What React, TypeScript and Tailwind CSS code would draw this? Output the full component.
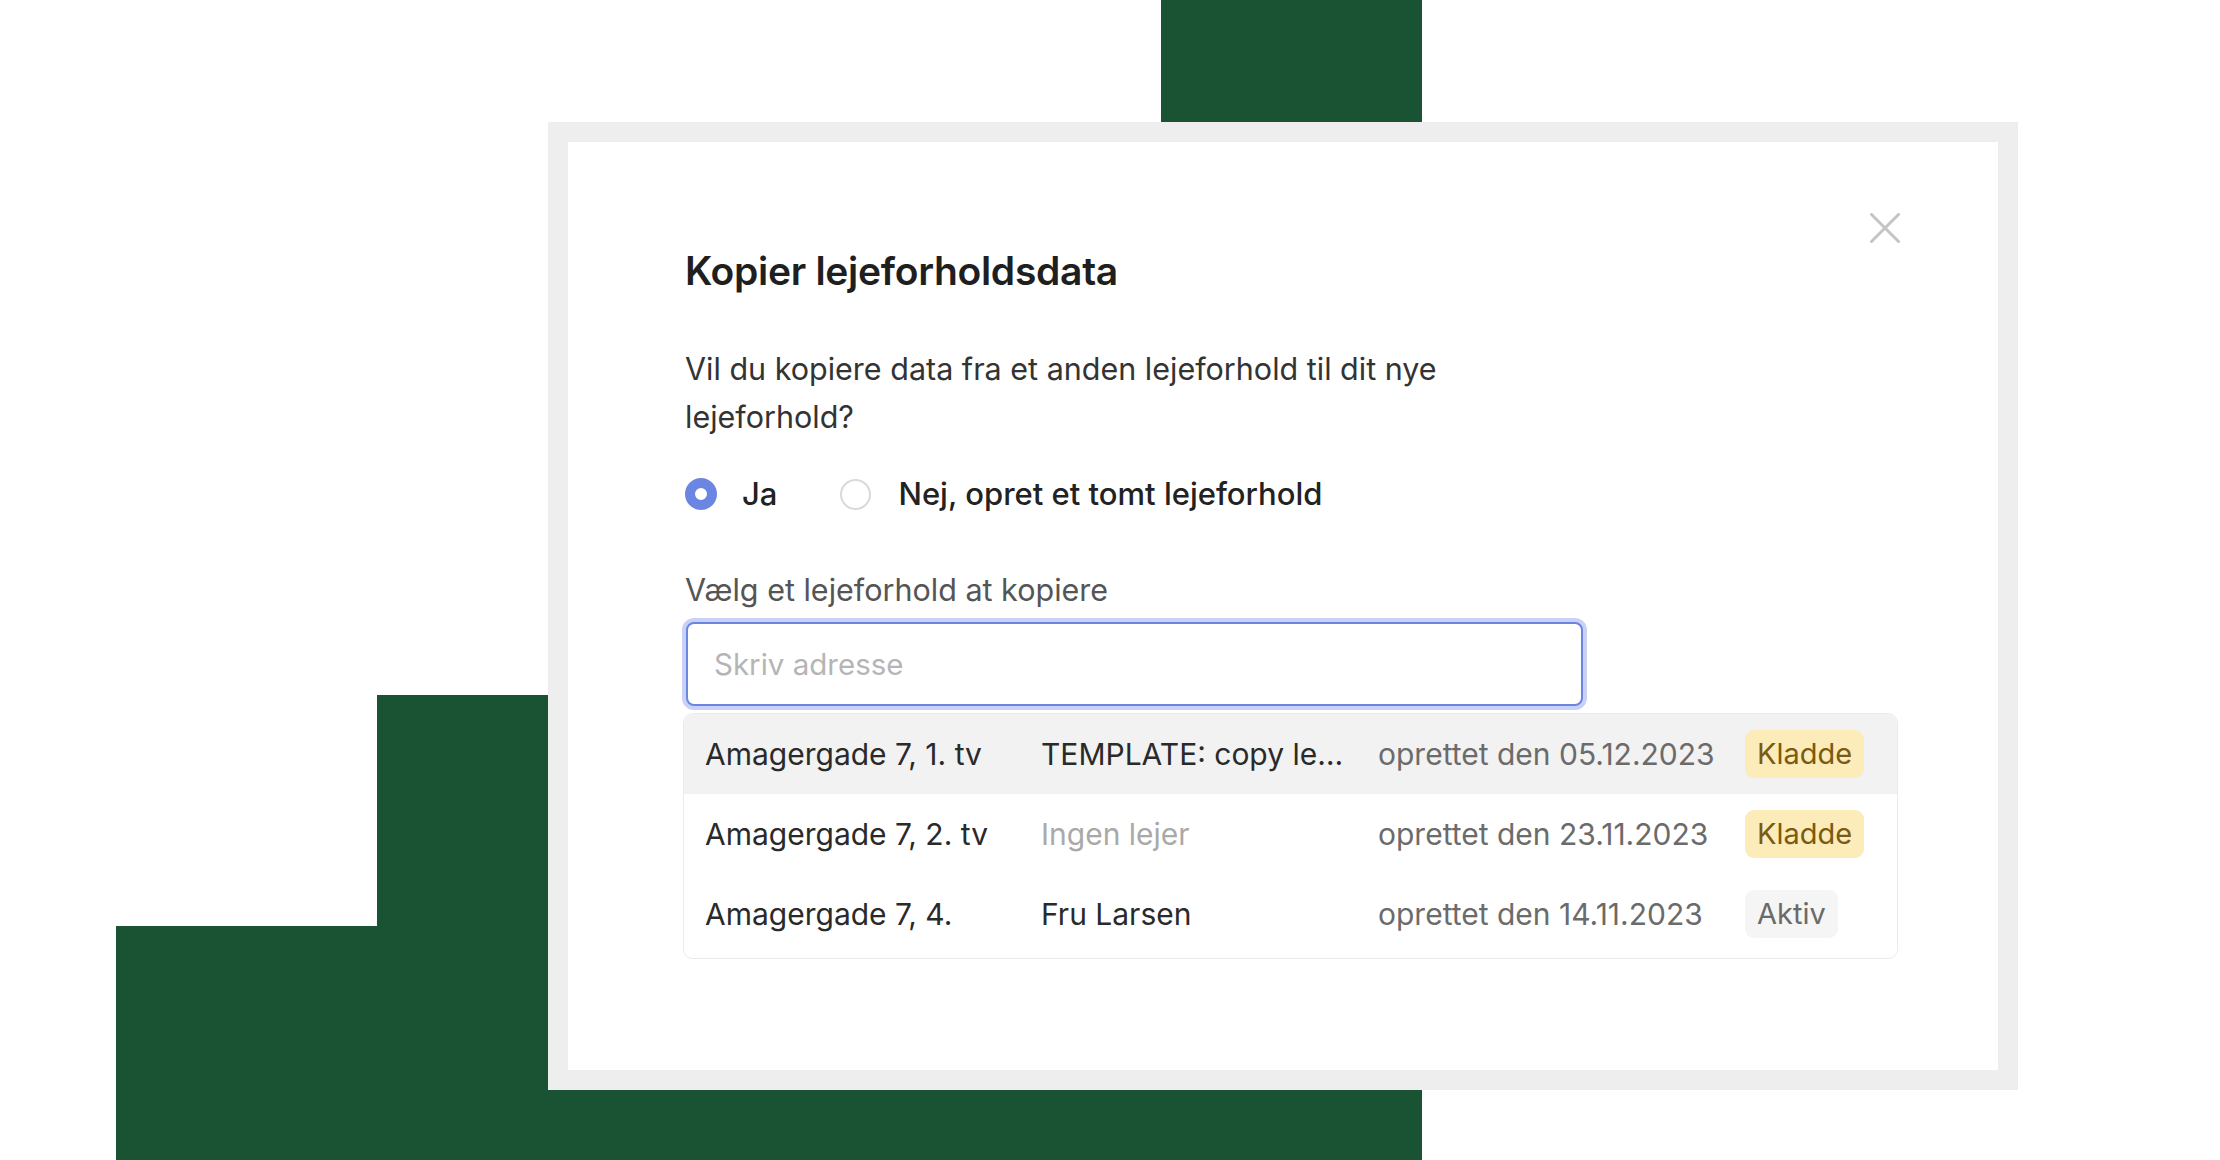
import React from "react";

type Row = {
  address: string;
  tenant: string;
  tenantMuted?: boolean;
  created: string;
  status: "Kladde" | "Aktiv";
  highlighted?: boolean;
};

const rows: Row[] = [
  {
    address: "Amagergade 7, 1. tv",
    tenant: "TEMPLATE: copy lejeforhold data",
    created: "oprettet den 05.12.2023",
    status: "Kladde",
    highlighted: true,
  },
  {
    address: "Amagergade 7, 2. tv",
    tenant: "Ingen lejer",
    tenantMuted: true,
    created: "oprettet den 23.11.2023",
    status: "Kladde",
  },
  {
    address: "Amagergade 7, 4.",
    tenant: "Fru Larsen",
    created: "oprettet den 14.11.2023",
    status: "Aktiv",
  },
];

function CloseIcon() {
  return (
    <svg width="30" height="30" viewBox="0 0 30 30" fill="none">
      <path d="M1.5 1.5L28.5 28.5M28.5 1.5L1.5 28.5" stroke="#c4c4c4" strokeWidth="3" strokeLinecap="round" />
    </svg>
  );
}

function StatusBadge({ status }: { status: Row["status"] }) {
  if (status === "Kladde") {
    return (
      <span className="inline-flex h-[48px] items-center rounded-[9px] bg-[#fbecb9] px-[12px] text-[29px] text-[#7b5a12]">
        Kladde
      </span>
    );
  }
  return (
    <span className="inline-flex h-[48px] items-center rounded-[9px] bg-[#f5f5f5] px-[12px] text-[29px] text-[#6a6a6a]">
      Aktiv
    </span>
  );
}

export default function App() {
  return (
    <div
      className="relative h-[1160px] w-[2220px] overflow-hidden bg-white"
      style={{ fontFamily: "Inter, 'Noto Sans', sans-serif" }}
    >
      {/* decorative green blocks behind the dialog frame */}
      <div className="absolute left-[1161px] top-0 h-[140px] w-[261px] bg-[#1a5334]" />
      <div className="absolute left-[377px] top-[695px] h-[465px] w-[1045px] bg-[#1a5334]" />
      <div className="absolute left-[116px] top-[926px] h-[234px] w-[270px] bg-[#1a5334]" />

      <div className="relative z-10 pl-[548px] pt-[122px]">
        <div className="h-[968px] w-[1470px] bg-[#eeeeee] p-[20px]">
          <div className="flex h-full flex-col bg-white pl-[117px] pr-[98px] pt-[71px]">
            <div className="flex justify-end">
              <button className="flex h-[30px] w-[30px] items-center justify-center">
                <CloseIcon />
              </button>
            </div>

            <h2 className="mt-[8px] text-[39px] font-semibold leading-[40px] tracking-[-0.3px] text-[#1f1f1f]">
              Kopier lejeforholdsdata
            </h2>

            <p className="mt-[54px] w-[800px] text-[30.5px] leading-[48px] text-[#333333]">
              Vil du kopiere data fra et anden lejeforhold til dit nye lejeforhold?
            </p>

            <div className="mt-[33px] flex items-center text-[31px] font-medium leading-[40px] text-[#222222]">
              <label className="flex items-center">
                <span className="h-[32px] w-[32px] rounded-full border-[10px] border-[#6b86e2] bg-white" />
                <span className="ml-[25px]">Ja</span>
              </label>
              <label className="ml-[63px] flex items-center">
                <span className="h-[31px] w-[31px] rounded-full border-2 border-[#d9d9d9] bg-white" />
                <span className="ml-[27px]">Nej, opret et tomt lejeforhold</span>
              </label>
            </div>

            <div className="mt-[58px] text-[30.5px] leading-[36px] text-[#555555]">
              Vælg et lejeforhold at kopiere
            </div>

            <div className="ml-[1px] mt-[14px] w-[897px]">
              <div className="flex h-[84px] items-center rounded-[8px] border-2 border-[#6b86e2] bg-white px-[26px] shadow-[0_0_0_4px_#c9d2f6]">
                <span className="text-[29.5px] text-[#b5b5b5]">Skriv adresse</span>
              </div>
            </div>

            <div className="-ml-[2px] mt-[7px] w-[1215px] overflow-hidden rounded-[10px] border border-[#ebebeb] pb-[4px]">
              {rows.map((row) => (
                <div
                  key={row.address}
                  className={
                    "flex h-[80px] items-center px-[21px] text-[30px] " +
                    (row.highlighted ? "bg-[#f2f2f2]" : "bg-white")
                  }
                >
                  <div className="w-[336px] text-[#2a2a2a]">{row.address}</div>
                  <div
                    className={
                      "mr-[34px] w-[303px] truncate " +
                      (row.tenantMuted ? "text-[#a9a9a9]" : "text-[#2a2a2a]")
                    }
                  >
                    {row.tenant}
                  </div>
                  <div className="w-[367px] text-[#6b6b6b]">{row.created}</div>
                  <StatusBadge status={row.status} />
                </div>
              ))}
            </div>
          </div>
        </div>
      </div>
    </div>
  );
}
